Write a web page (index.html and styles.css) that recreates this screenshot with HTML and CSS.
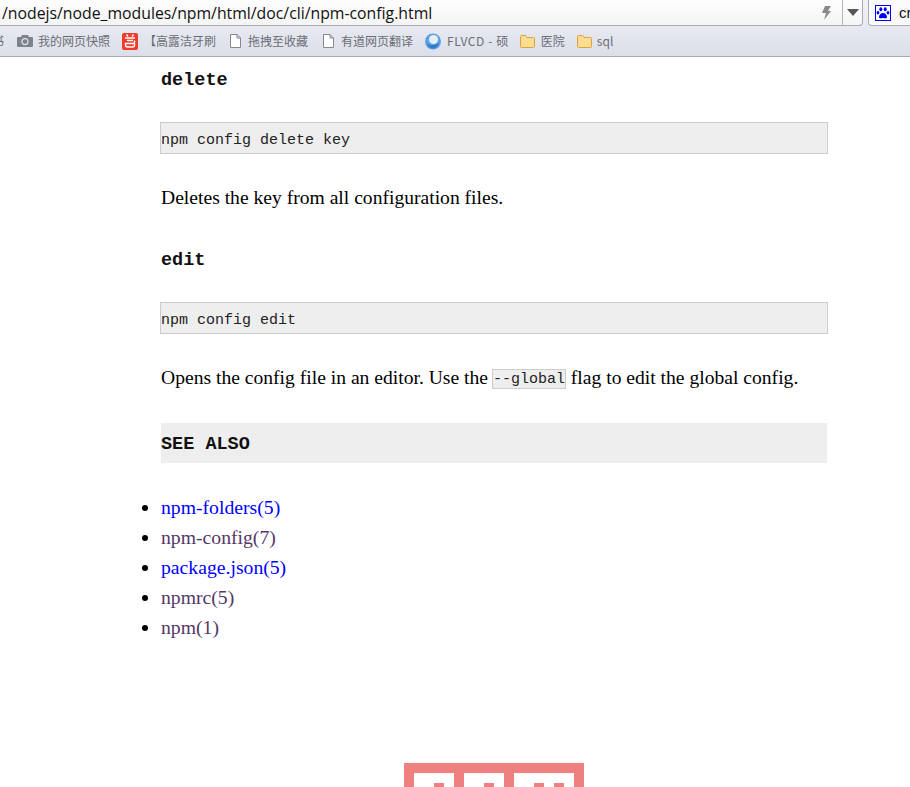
FILE: index.html
```html
<!DOCTYPE html>
<html lang="zh">
<head>
<meta charset="utf-8">
<title>npm-config</title>
<link rel="stylesheet" href="styles.css">
</head>
<body>
<header class="chrome">
  <div class="addressbar">
    <div class="addressbox">
      <span class="url">/nodejs/node_modules/npm/html/doc/cli/npm-config.html</span>
      <svg class="bolt" width="12" height="16" viewBox="0 0 12 16"><path d="M5 1h6L8 6h3l-7 9 2-7H2z" fill="#8a8a8a"/></svg>
      <div class="dropdown"><svg width="12" height="7" viewBox="0 0 12 7"><path d="M0 0h12L6 7z" fill="#555"/></svg></div>
    </div>
    <div class="searchbox">
      <svg width="16" height="16" viewBox="0 0 16 16"><rect x=".5" y=".5" width="15" height="15" fill="#fff" stroke="#00f"/><path d="M8 8c-2 0-4 2-4 4 0 1.500 1.500 1.500 2.500 1.200.9-.3 2.100-.3 3 0 1 .3 2.500.3 2.500-1.200 0-2-2-4-4-4z" fill="#00f"/><ellipse cx="5.800" cy="4.300" rx="1.500" ry="2" fill="#00f"/><ellipse cx="10.200" cy="4.300" rx="1.500" ry="2" fill="#00f"/><ellipse cx="3" cy="7.800" rx="1.400" ry="1.800" fill="#00f"/><ellipse cx="13" cy="7.800" rx="1.400" ry="1.800" fill="#00f"/></svg>
      <span class="searchtext">cr</span>
    </div>
  </div>
  <nav class="bookmarks">
    <span class="bm bm-cut">书</span>
    <span class="bm bm-camera"><svg width="16" height="12" viewBox="0 0 16 12"><path d="M1 2h3l1-2h6l1 2h3a1 1 0 0 1 1 1v8a1 1 0 0 1-1 1H1a1 1 0 0 1-1-1V3a1 1 0 0 1 1-1z" fill="#7d838c"/><circle cx="8" cy="6.600" r="3.600" fill="#dfe2ea"/><circle cx="8" cy="6.600" r="2.400" fill="#7d838c"/></svg>我的网页快照</span>
    <span class="bm bm-red"><svg width="16" height="17" viewBox="0 0 16 17"><rect width="16" height="17" rx="2" fill="#f03a2a"/><path d="M4.500 1.500l1.500 2M11.500 1.500l-1.500 2M3 5h10M5 7.500h6M12.500 7.500v4.500a2 2 0 0 1-2 2H5.500a2 2 0 0 1-2-2v-1.500H12" fill="none" stroke="#fff" stroke-width="1.400"/></svg>【高露洁牙刷</span>
    <span class="bm bm-doc1"><svg width="11" height="14" viewBox="0 0 11 14"><path d="M.5.5h6.500l3.500 3.500v9.500H.5z M7 .5V4h3.500" fill="#fff" stroke="#85888f"/></svg>拖拽至收藏</span>
    <span class="bm bm-doc2"><svg width="11" height="14" viewBox="0 0 11 14"><path d="M.5.5h6.500l3.500 3.500v9.500H.5z M7 .5V4h3.500" fill="#fff" stroke="#85888f"/></svg>有道网页翻译</span>
    <span class="bm bm-globe"><svg width="16" height="17" viewBox="0 0 16 17"><circle cx="8" cy="8.500" r="8" fill="#5b9fe4"/><circle cx="8.500" cy="6.500" r="4.500" fill="#e6eef6"/><path d="M1.500 10c3 3 9 3 12.500-.5-1 4.500-4 6-6 6s-5-2-6.500-5.500z" fill="#2f78cc"/></svg>FLVCD - 硕</span>
    <span class="bm bm-folder1"><svg width="15" height="13" viewBox="0 0 15 13"><path d="M.5 1.500a1 1 0 0 1 1-1h4l1.500 2h6.500a1 1 0 0 1 1 1v8a1 1 0 0 1-1 1h-12a1 1 0 0 1-1-1z" fill="#fbdd92" stroke="#dda23a"/></svg>医院</span>
    <span class="bm bm-folder2"><svg width="15" height="13" viewBox="0 0 15 13"><path d="M.5 1.500a1 1 0 0 1 1-1h4l1.500 2h6.500a1 1 0 0 1 1 1v8a1 1 0 0 1-1 1h-12a1 1 0 0 1-1-1z" fill="#fbdd92" stroke="#dda23a"/></svg>sql</span>
  </nav>
</header>
<main class="doc">
  <h3 class="cmd first">delete</h3>
  <pre class="block">npm config delete key</pre>
  <p class="para">Deletes the key from all configuration files.</p>
  <h3 class="cmd">edit</h3>
  <pre class="block">npm config edit</pre>
  <p class="para">Opens the config file in an editor. Use the <code class="inline">--global</code> flag to edit the global config.</p>
  <h2 class="section">SEE ALSO</h2>
  <ul class="links">
    <li><a class="link" href="#a">npm-folders(5)</a></li>
    <li><a class="link visited" href="#b">npm-config(7)</a></li>
    <li><a class="link" href="#c">package.json(5)</a></li>
    <li><a class="link visited" href="#d">npmrc(5)</a></li>
    <li><a class="link visited" href="#e">npm(1)</a></li>
  </ul>
</main>
<footer class="logo">
  <svg width="180" height="24" viewBox="0 0 180 24"><path d="M0 0h180v24H170V10h-60v14H100V10H60v14H50V10H10v14H0z" fill="#ef8080"/><path d="M30 20h10v4H30zM80 20h10v4H80zM130 20h10v4h-10zM150 20h10v4h-10z" fill="#ef8080"/></svg>
</footer>
</body>
</html>
```
FILE: styles.css
```css
html, body {
  margin: 0;
  padding: 0;
  height: 787px;
  overflow: hidden;
  background: #fff;
}
body {
  display: flex;
  flex-direction: column;
  font-family: "Liberation Serif", serif;
  font-size: 19.6px;
  color: #000;
}
.chrome {
  flex: none;
  height: 57px;
  box-sizing: border-box;
  border-bottom: 1px solid #a9abb0;
  background: linear-gradient(#f2f3f8, #dcdfe9);
  overflow: hidden;
}
.addressbar {
  height: 26px;
  display: flex;
  gap: 5px;
}
.addressbox {
  width: 863px;
  flex: none;
  box-sizing: border-box;
  height: 26px;
  display: flex;
  align-items: center;
  background: linear-gradient(#fdfdfd, #f5f5f5);
  border-bottom: 1px solid #a8abb0;
  border-right: 1px solid #a8abb0;
  border-bottom-right-radius: 4px;
}
.url {
  flex: 1;
  padding-left: 2px;
  font: 15.8px/24px "Open Sans", sans-serif;
  color: #111;
}
.bolt {
  margin-right: 10px;
}
.dropdown {
  width: 19px;
  height: 25px;
  display: flex;
  align-items: center;
  justify-content: center;
  border-left: 1px solid #b0b3b8;
}
.searchbox {
  flex: 1;
  box-sizing: border-box;
  height: 26px;
  display: flex;
  align-items: center;
  gap: 8px;
  padding-left: 6px;
  background: #fbfbfb;
  border-left: 1px solid #a8abb0;
  border-bottom: 1px solid #a8abb0;
  border-bottom-left-radius: 4px;
}
.searchtext {
  font: 15px "Liberation Sans", sans-serif;
  color: #111;
}
.bookmarks {
  height: 30px;
  display: flex;
  align-items: center;
  font: 12px/16px "Noto Sans CJK SC", "Liberation Sans", sans-serif;
  color: #6a6d75;
  white-space: nowrap;
}
.bm {
  display: inline-flex;
  align-items: center;
  gap: 5px;
  flex: none;
}
.bm-cut { margin-left: -8px; width: 12px; }
.bm-camera { margin-left: 13px; }
.bm-red { margin-left: 12px; gap: 6px; }
.bm-doc1 { margin-left: 14px; gap: 7px; }
.bm-doc2 { margin-left: 15px; gap: 7px; }
.bm-globe { margin-left: 12px; gap: 6px; letter-spacing: .6px; }
.bm-folder1 { margin-left: 11px; gap: 6px; }
.bm-folder2 { margin-left: 12px; gap: 5px; }
.doc {
  flex: none;
  width: 666px;
  margin-left: 161px;
}
.cmd {
  margin: 0;
  padding-top: 35px;
  font: bold 18.5px/26px "Liberation Mono", monospace;
  color: #111;
}
.cmd.first {
  padding-top: 11px;
}
.block {
  margin: 28px -1px 0;
  height: 32px;
  box-sizing: border-box;
  padding-top: 3px;
  background: #eee;
  border: 1px solid #ccc;
  font: 15px/30px "Liberation Mono", monospace;
  color: #222;
}
.para {
  margin: 29px 0 0;
  line-height: 30px;
}
.inline {
  display: inline-block;
  box-sizing: border-box;
  height: 20px;
  margin-left: -1px;
  padding: 0;
  background: #eee;
  border: 1px solid #ccc;
  font: 15px/19px "Liberation Mono", monospace;
  color: #222;
  vertical-align: 1px;
}
.section {
  margin: 30px 0 0;
  height: 40px;
  background: #eee;
  font: bold 18.5px/44px "Liberation Mono", monospace;
  color: #111;
}
.links {
  margin: 29px 0 0;
  padding: 0;
  list-style: disc;
  font-size: 19.7px;
}
.links li {
  line-height: 30px;
}
.link {
  color: #00f;
  text-decoration: none;
}
.link.visited {
  color: #543868;
}
.logo {
  position: absolute;
  left: 404px;
  top: 763px;
  line-height: 0;
}
```
